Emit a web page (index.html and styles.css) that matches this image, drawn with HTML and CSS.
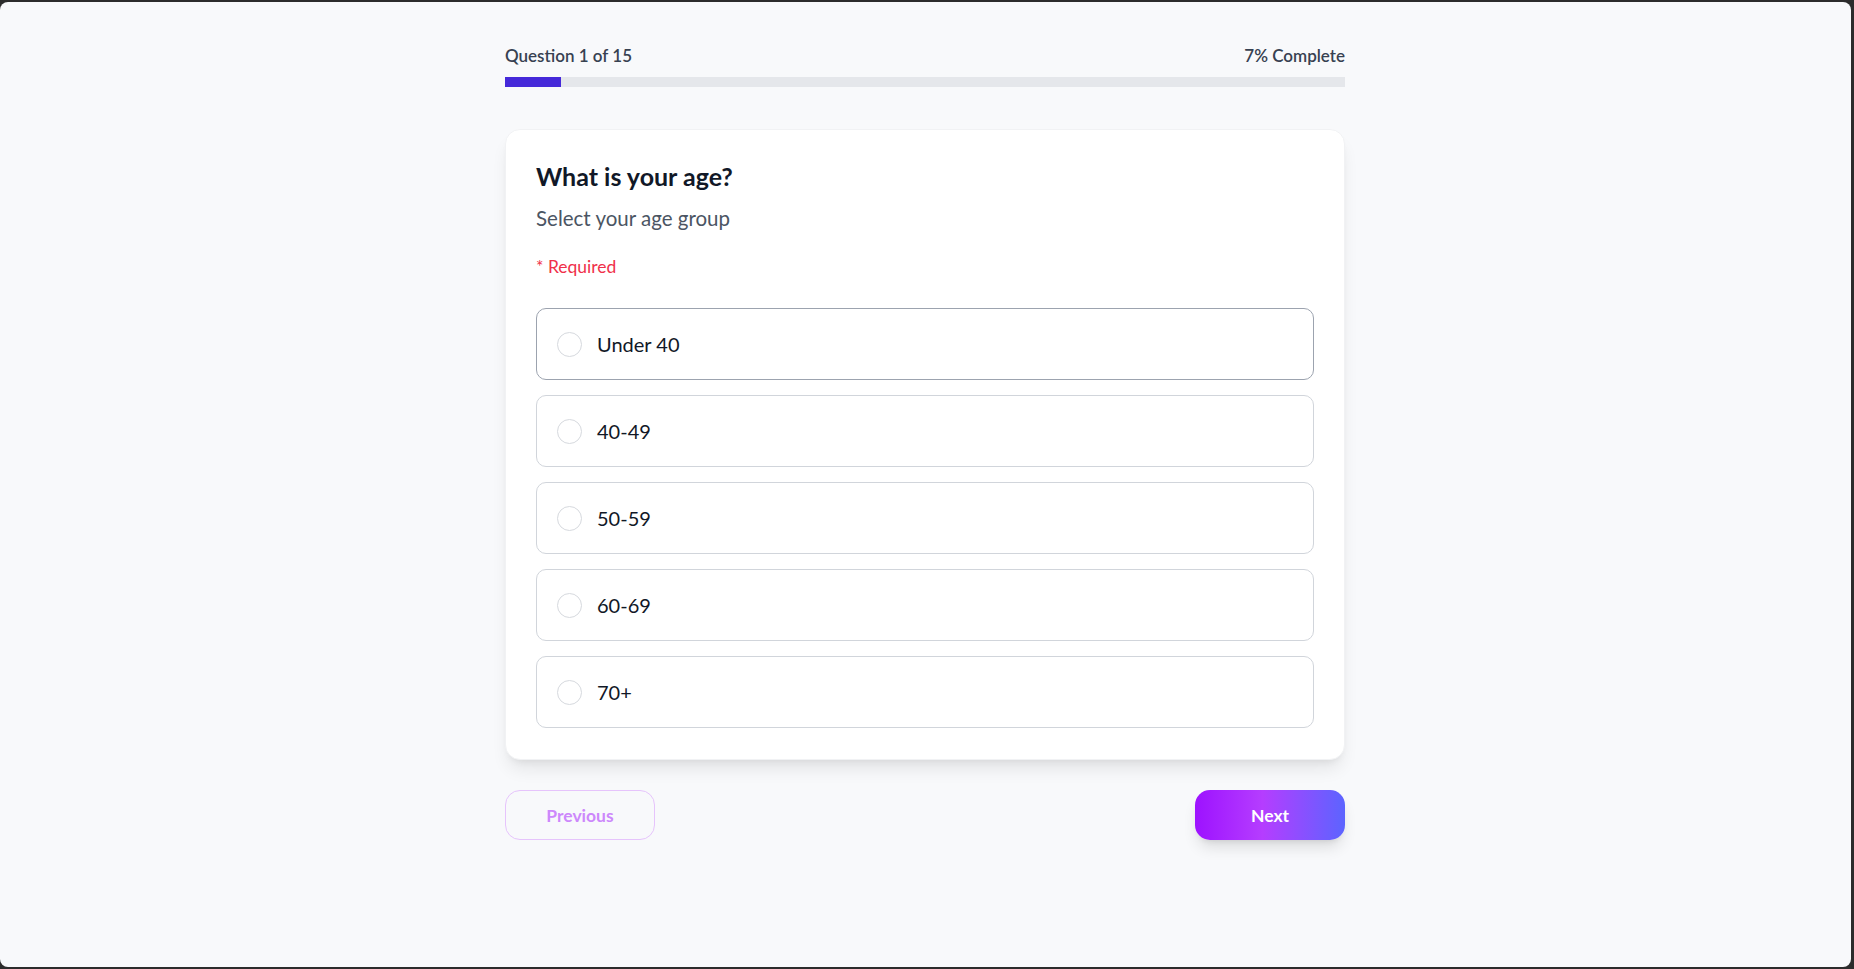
FILE: index.html
```html
<!DOCTYPE html>
<html lang="en">
<head>
<meta charset="utf-8">
<title>Survey</title>
<link rel="stylesheet" href="styles.css">
</head>
<body>
<div class="app">
  <div class="wrap">
    <div class="progress-head">
      <span>Question 1 of 15</span>
      <span>7% Complete</span>
    </div>
    <div class="bar"><div class="bar-fill" style="width: 6.67%"></div></div>

    <div class="card">
      <h1 class="title">What is your age?</h1>
      <p class="subtitle">Select your age group</p>
      <p class="required">* Required</p>
      <div class="options">
        <label class="option option-hover"><span class="radio"></span><span class="opt-text">Under 40</span></label>
        <label class="option"><span class="radio"></span><span class="opt-text">40-49</span></label>
        <label class="option"><span class="radio"></span><span class="opt-text">50-59</span></label>
        <label class="option"><span class="radio"></span><span class="opt-text">60-69</span></label>
        <label class="option"><span class="radio"></span><span class="opt-text">70+</span></label>
      </div>
    </div>

    <div class="nav">
      <button class="btn btn-prev">Previous</button>
      <button class="btn btn-next">Next</button>
    </div>
  </div>
</div>
</body>
</html>
```

FILE: styles.css
```css
* { box-sizing: border-box; }
html, body { margin: 0; padding: 0; }
body {
  background: #2c2c2c;
  height: 969px;
  overflow: hidden;
  font-family: "Segoe UI", Lato, "Noto Sans", sans-serif;
}
.app {
  height: 965px;
  margin: 2px 3px 2px 0;
  padding-right: 1px;
  background: #f8f9fb;
  border-radius: 8px;
  overflow: hidden;
}
.wrap {
  width: 840px;
  margin: 0 auto;
  padding-top: 41px;
}
.progress-head {
  display: flex;
  justify-content: space-between;
  font-size: 17px;
  line-height: 25px;
  font-weight: 600;
  color: #374151;
}
.bar {
  margin-top: 9px;
  height: 10px;
  background: #e5e7eb;
}
.bar-fill {
  height: 100%;
  background: #4529d9;
}
.card {
  margin-top: 42px;
  background: #ffffff;
  border: 1px solid #f1f2f4;
  border-radius: 15px;
  padding: 29px 30px 31px;
  box-shadow: 0 12px 18px -4px rgba(0,0,0,0.09), 0 5px 8px -5px rgba(0,0,0,0.09);
}
.title {
  margin: 0;
  font-size: 25px;
  line-height: 35px;
  font-weight: 700;
  color: #111827;
}
.subtitle {
  margin: 9px 0 0;
  font-size: 20.5px;
  line-height: 30px;
  color: #4b5563;
}
.required {
  margin: 21px 0 0;
  font-size: 17.5px;
  line-height: 25px;
  color: #f0304a;
}
.options {
  margin-top: 29px;
  display: flex;
  flex-direction: column;
  gap: 15px;
}
.option {
  display: flex;
  align-items: center;
  gap: 15px;
  padding: 20px;
  border: 1px solid #d1d5db;
  border-radius: 10px;
  background: #fff;
}
.option-hover { border-color: #9ca3af; }
.radio {
  width: 25px;
  height: 25px;
  border: 1.5px solid #d6d9de;
  border-radius: 50%;
  flex: none;
}
.opt-text {
  font-size: 20px;
  line-height: 30px;
  color: #111827;
}
.nav {
  margin-top: 30px;
  display: flex;
  justify-content: space-between;
}
.btn {
  width: 150px;
  height: 50px;
  border-radius: 15px;
  font-family: inherit;
  font-size: 17.5px;
  font-weight: 700;
}
.btn-prev {
  background: transparent;
  border: 1px solid #e6c4fc;
  color: #cd88fb;
}
.btn-next {
  border: none;
  color: #ffffff;
  background: linear-gradient(90deg, #9d12ff 0%, #b53dff 45%, #5c64ff 100%);
  box-shadow: 0 10px 15px -3px rgba(0,0,0,0.12), 0 4px 6px -4px rgba(0,0,0,0.12);
}
```
